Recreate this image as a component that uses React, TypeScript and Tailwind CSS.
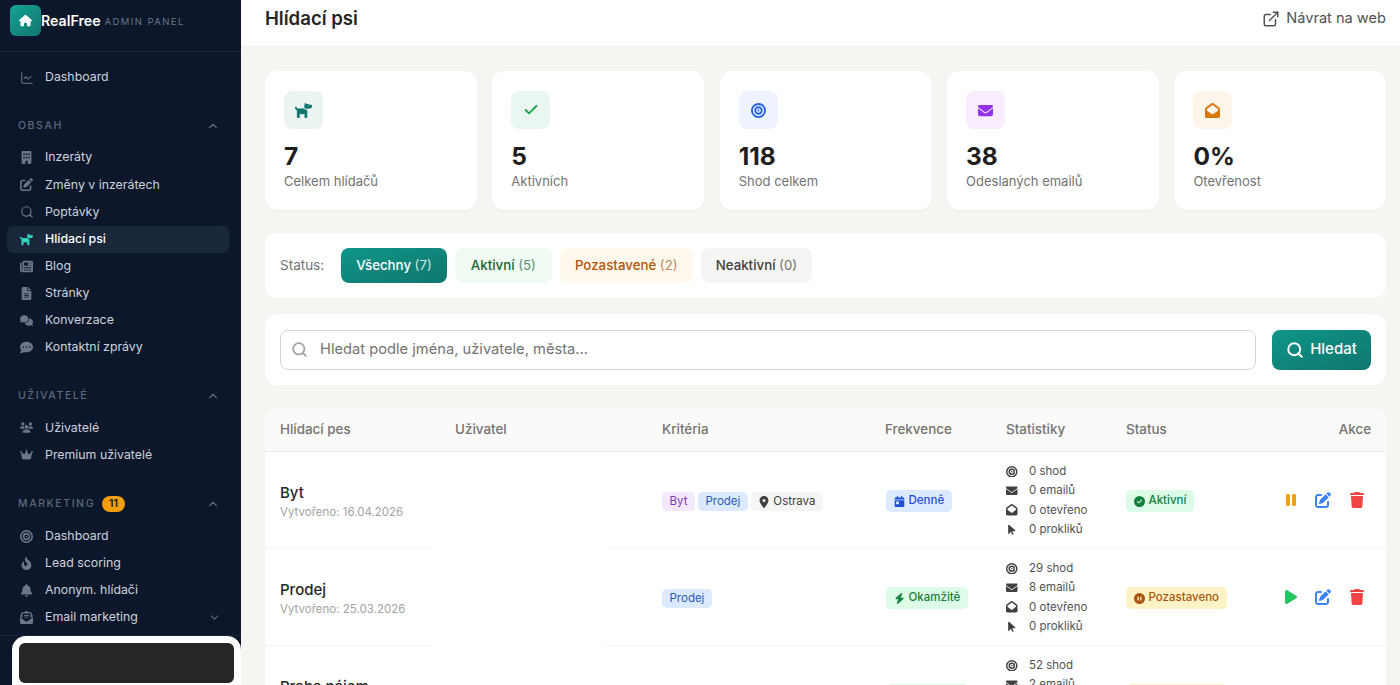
import React from "react";
import {
    FaArrowPointer, FaBell, FaBolt, FaBuilding, FaBullseye, FaCalendarDay, FaCircleCheck, FaCirclePause, FaComments, FaCommentDots,
    FaCrown, FaDog, FaEnvelope, FaEnvelopeOpen, FaEnvelopeOpenText, FaFileLines, FaFireFlameCurved, FaHouse, FaLocationDot,
    FaNewspaper, FaPause, FaPenToSquare, FaPlay, FaTrash, FaUsers,
} from "react-icons/fa6";
import { Check, ChartLine, ChevronDown, ChevronUp, ExternalLink, Search } from "lucide-react";

const font = { fontFamily: "Inter, 'Noto Sans', sans-serif" };

function NavItem({ icon, label, active, chevron }: { icon: React.ReactNode; label: string; active?: boolean; chevron?: boolean }) {
    return (
        <div className={`flex h-[27.15px] items-center rounded-md pl-[13px] pr-[8px] text-[12.35px] ${active ? "bg-[#1a2639] text-white font-medium" : "text-[#ccd3de]"}`}>
            <span className={`flex w-[25px] shrink-0 items-center text-[13px] ${active ? "text-[#2dd4bf]" : "text-[#6b7688]"}`}>{icon}</span>
            <span className="flex-1">{label}</span>
            {chevron && <ChevronDown size={13} className="text-[#5d687a]" />}
        </div>
    );
}

function GroupLabel({ label, badge }: { label: string; badge?: string }) {
    return (
        <div className="flex h-[27px] items-center pl-[11px] pr-[9px]">
            <span className="text-[10.5px] font-medium tracking-[0.15em] text-[#5d687a]">{label}</span>
            {badge && <span className="ml-[7px] rounded-full bg-[#f59e0b] px-[7px] py-[1px] text-[10.5px] font-semibold leading-[14px] text-[#0c172b]">{badge}</span>}
            <ChevronUp size={14} className="ml-auto text-[#5d687a]" />
        </div>
    );
}

function Sidebar() {
    return (
        <aside className="relative flex w-[241px] shrink-0 flex-col bg-[#0c172b]">
            <div className="flex h-[52px] shrink-0 items-start border-b border-[#1b2739] pl-[10px] pt-[5px]">
                <div className="flex h-[31px] w-[31px] items-center justify-center rounded-md bg-gradient-to-br from-[#16a394] to-[#0f766e] text-[13px] text-white">
                    <FaHouse />
                </div>
                <span className="mt-[6px] text-[14.2px] font-semibold leading-[20px] text-white">RealFree</span>
                <span className="ml-[4px] mt-[9px] text-[9.5px] leading-[16px] tracking-[0.15em] text-[#6b7688]">ADMIN PANEL</span>
            </div>
            <nav className="pl-[7px] pr-[12px] pt-[12px]">
                <NavItem icon={<ChartLine size={14} strokeWidth={1.75} />} label="Dashboard" />
                <div className="mt-[21px]"><GroupLabel label="OBSAH" /></div>
                <div className="mt-[5px]">
                    <NavItem icon={<FaBuilding />} label="Inzeráty" />
                    <NavItem icon={<FaPenToSquare />} label="Změny v inzerátech" />
                    <NavItem icon={<Search size={14} />} label="Poptávky" />
                    <NavItem icon={<FaDog />} label="Hlídací psi" active />
                    <NavItem icon={<FaNewspaper />} label="Blog" />
                    <NavItem icon={<FaFileLines />} label="Stránky" />
                    <NavItem icon={<FaComments />} label="Konverzace" />
                    <NavItem icon={<FaCommentDots />} label="Kontaktní zprávy" />
                </div>
                <div className="mt-[21px]"><GroupLabel label="UŽIVATELÉ" /></div>
                <div className="mt-[5px]">
                    <NavItem icon={<FaUsers />} label="Uživatelé" />
                    <NavItem icon={<FaCrown />} label="Premium uživatelé" />
                </div>
                <div className="mt-[22px]"><GroupLabel label="MARKETING" badge="11" /></div>
                <div className="mt-[5px]">
                    <NavItem icon={<FaBullseye />} label="Dashboard" />
                    <NavItem icon={<FaFireFlameCurved />} label="Lead scoring" />
                    <NavItem icon={<FaBell />} label="Anonym. hlídači" />
                    <NavItem icon={<FaEnvelopeOpenText />} label="Email marketing" chevron />
                </div>
            </nav>
            {/* redacted user box over the sidebar footer */}
            <div className="absolute inset-x-0 bottom-0 h-[50px] border-t border-[#1b2739] pl-[12px]">
                <div className="h-full rounded-t-[14px] bg-white px-[7px] pt-[7px]">
                    <div className="h-[40px] rounded-md bg-[#262626]" />
                </div>
            </div>
        </aside>
    );
}

const statCards = [
    { icon: <FaDog className="text-[17px]" />, box: "bg-[#ecf3f3]", color: "text-[#0f766e]", value: "7", label: "Celkem hlídačů" },
    { icon: <Check size={16} strokeWidth={2.75} />, box: "bg-[#eaf6f0]", color: "text-[#16a34a]", value: "5", label: "Aktivních" },
    { icon: <FaBullseye />, box: "bg-[#eef3fe]", color: "text-[#2563eb]", value: "118", label: "Shod celkem" },
    { icon: <FaEnvelope />, box: "bg-[#f9ecfd]", color: "text-[#9333ea]", value: "38", label: "Odeslaných emailů" },
    { icon: <FaEnvelopeOpen />, box: "bg-[#fef5ea]", color: "text-[#d97706]", value: "0%", label: "Otevřenost" },
];

function StatCard({ card }: { card: (typeof statCards)[number] }) {
    return (
        <div className="h-[139px] rounded-xl bg-white pl-[19px] pt-[20px] shadow-[0_1px_2px_rgba(0,0,0,0.04)]">
            <div className={`flex h-[38px] w-[39px] items-center justify-center rounded-lg text-[15px] ${card.box} ${card.color}`}>{card.icon}</div>
            <div className="mt-[12px] text-[24.5px] font-bold leading-[30px] text-[#1f1f1f]">{card.value}</div>
            <div className="text-[13px] leading-[20px] text-[#737373]">{card.label}</div>
        </div>
    );
}

function FilterButton({ label, count, className, countClass }: { label: string; count: string; className: string; countClass: string }) {
    return (
        <div className={`flex h-[35px] items-center rounded-lg text-[13.3px] font-medium ${className}`}>
            {label}&nbsp;<span className={`font-normal ${countClass}`}>{count}</span>
        </div>
    );
}

function Tag({ children, className }: { children: React.ReactNode; className: string }) {
    return <span className={`inline-flex h-[19px] items-center gap-[3px] rounded-[5px] px-[7.5px] text-[11.5px] ${className}`}>{children}</span>;
}

function Pill({ icon, label, className }: { icon: React.ReactNode; label: string; className: string }) {
    return (
        <span className={`inline-flex h-[22px] items-center gap-[4px] rounded-[5px] px-[7.5px] text-[11.5px] font-medium ${className}`}>
            <span className="text-[11px]">{icon}</span>
            {label}
        </span>
    );
}

function StatLine({ icon, text }: { icon: React.ReactNode; text: string }) {
    return (
        <div className="flex h-[19.3px] items-center text-[11.5px] text-[#525252]">
            <span className="flex w-[23px] items-center text-[11.5px] text-[#404040]">{icon}</span>
            {text}
        </div>
    );
}

function Stats({ shod, emails, opened, clicks }: { shod: string; emails: string; opened: string; clicks: string }) {
    return (
        <div>
            <StatLine icon={<FaBullseye />} text={`${shod} shod`} />
            <StatLine icon={<FaEnvelope />} text={`${emails} emailů`} />
            <StatLine icon={<FaEnvelopeOpen />} text={`${opened} otevřeno`} />
            <StatLine icon={<FaArrowPointer />} text={`${clicks} prokliků`} />
        </div>
    );
}

const rows = [
    {
        name: "Byt",
        created: "Vytvořeno: 16.04.2026",
        tags: (
            <>
                <Tag className="bg-[#f3e8fd] text-[#7e3bb8]">Byt</Tag>
                <Tag className="bg-[#dbeafe] text-[#2f5bb7]">Prodej</Tag>
                <Tag className="bg-[#f5f5f4] text-[#404040]"><FaLocationDot className="text-[12px]" />Ostrava</Tag>
            </>
        ),
        freq: <Pill icon={<FaCalendarDay />} label="Denně" className="bg-[#dbeafe] text-[#1d4ed8]" />,
        stats: { shod: "0", emails: "0", opened: "0", clicks: "0" },
        status: <Pill icon={<FaCircleCheck />} label="Aktivní" className="bg-[#dcfce7] text-[#15803d]" />,
        toggle: <FaPause className="-mr-[2px] text-[#f59e0b]" />,
    },
    {
        name: "Prodej",
        created: "Vytvořeno: 25.03.2026",
        tags: <Tag className="bg-[#dbeafe] text-[#2f5bb7]">Prodej</Tag>,
        freq: <Pill icon={<FaBolt />} label="Okamžitě" className="bg-[#dcfce7] text-[#15803d]" />,
        stats: { shod: "29", emails: "8", opened: "0", clicks: "0" },
        status: <Pill icon={<FaCirclePause />} label="Pozastaveno" className="bg-[#fef3c7] text-[#a8550f]" />,
        toggle: <FaPlay className="-mr-[2px] text-[#22c55e]" />,
    },
    {
        name: "Praha nájem",
        created: "Vytvořeno: 25.03.2026",
        tags: <Tag className="bg-[#dbeafe] text-[#2f5bb7]">Pronájem</Tag>,
        freq: <Pill icon={<FaBolt />} label="Okamžitě" className="bg-[#dcfce7] text-[#15803d]" />,
        stats: { shod: "52", emails: "2", opened: "0", clicks: "0" },
        status: <Pill icon={<FaCirclePause />} label="Pozastaveno" className="bg-[#fef3c7] text-[#a8550f]" />,
        toggle: <FaPlay className="-mr-[2px] text-[#22c55e]" />,
    },
];

export default function App() {
    return (
        <div className="flex h-screen overflow-hidden bg-white" style={font}>
            <Sidebar />
            <main className="min-w-0 flex-1 bg-[#f5f5f2]">
                <header className="flex h-[47px] items-center justify-between border-b border-[#efefec] bg-white pb-[8px] pl-[24px] pr-[14px]">
                    <h1 className="text-[18.6px] font-semibold text-[#262626]">Hlídací psi</h1>
                    <div className="flex items-center gap-[6px] text-[14.6px] text-[#525252]">
                        <ExternalLink size={18} />
                        Návrat na web
                    </div>
                </header>

                <div className="pl-[24px] pr-[14px] pt-[24px]">
                    <div className="grid grid-cols-5 gap-[15.75px]">
                        {statCards.map((card) => <StatCard key={card.label} card={card} />)}
                    </div>

                    <div className="mt-[23px] flex h-[65px] items-center gap-[8px] rounded-xl bg-white pl-[15px]">
                        <span className="mr-[9px] text-[13.5px] text-[#737373]">Status:</span>
                        <FilterButton label="Všechny" count="(7)" className="bg-gradient-to-br from-[#0f9688] to-[#0f766e] px-[15px] text-white" countClass="text-[#cde9e5]" />
                        <FilterButton label="Aktivní" count="(5)" className="bg-[#f0fbf4] px-[16px] text-[#166534]" countClass="text-[#5b8f6f]" />
                        <FilterButton label="Pozastavené" count="(2)" className="bg-[#fef9ec] px-[15px] text-[#b45309]" countClass="text-[#bd8a5c]" />
                        <FilterButton label="Neaktivní" count="(0)" className="bg-[#f5f5f4] px-[15px] text-[#404040]" countClass="text-[#737373]" />
                    </div>

                    <div className="mt-[16px] flex h-[71px] items-center gap-[16px] rounded-xl bg-white px-[15px]">
                        <div className="flex h-[40px] flex-1 items-center rounded-lg border border-[#d4d4d4] pl-[10px] text-[14.7px] text-[#737373]">
                            <Search size={17} strokeWidth={2.5} className="mr-[12px] text-[#a3a3a3]" />
                            Hledat podle jména, uživatele, města...
                        </div>
                        <div className="flex h-[40px] w-[99px] items-center justify-center gap-[6px] rounded-lg bg-gradient-to-br from-[#0f9688] to-[#0f766e] text-[15px] font-medium text-white">
                            <Search size={18} strokeWidth={2.5} />
                            Hledat
                        </div>
                    </div>

                    <div className="mt-[23px] overflow-hidden rounded-t-xl bg-white">
                        <table className="w-full table-fixed border-separate border-spacing-0">
                            <colgroup>
                                <col className="w-[175px]" />
                                <col className="w-[207px]" />
                                <col className="w-[223px]" />
                                <col className="w-[121px]" />
                                <col className="w-[120px]" />
                                <col className="w-[135px]" />
                                <col />
                            </colgroup>
                            <thead>
                                <tr className="h-[44px] bg-[#fafaf8] text-left text-[13.4px] text-[#737373]">
                                    <th className="border-b border-[#ececea] pl-[15px] font-medium">Hlídací pes</th>
                                    <th className="border-b border-[#ececea] pl-[15px] font-medium">Uživatel</th>
                                    <th className="border-b border-[#ececea] pl-[15px] font-medium">Kritéria</th>
                                    <th className="border-b border-[#ececea] pl-[15px] font-medium">Frekvence</th>
                                    <th className="border-b border-[#ececea] pl-[15px] font-medium">Statistiky</th>
                                    <th className="border-b border-[#ececea] pl-[15px] font-medium">Status</th>
                                    <th className="border-b border-[#ececea] pr-[15px] text-right font-medium">Akce</th>
                                </tr>
                            </thead>
                            <tbody>
                                {rows.map((row) => (
                                    <tr key={row.name} className="h-[97px]">
                                        <td className="border-b border-[#f5f5f3] pl-[15px] pt-[5px]">
                                            <div className="text-[15px] font-medium leading-[20px] text-[#262626]">{row.name}</div>
                                            <div className="mt-[1px] text-[11.5px] text-[#a3a3a3]">{row.created}</div>
                                        </td>
                                        {/* user column is blanked out in the source, including its row line */}
                                        <td className="relative border-b border-[#f5f5f3]">
                                            <div className="absolute -bottom-px -left-[7px] h-[3px] w-[172px] bg-white" />
                                        </td>
                                        <td className="border-b border-[#f5f5f3] pl-[15px] pt-[3px]">
                                            <div className="flex items-center gap-[3px]">{row.tags}</div>
                                        </td>
                                        <td className="border-b border-[#f5f5f3] pl-[16px] pt-[1px]">{row.freq}</td>
                                        <td className="border-b border-[#f5f5f3] pl-[15px] pt-[1px]"><Stats {...row.stats} /></td>
                                        <td className="border-b border-[#f5f5f3] pl-[15px] pt-[1px]">{row.status}</td>
                                        <td className="border-b border-[#f5f5f3] pb-[1px] pr-[21px]">
                                            <div className="flex items-center justify-end gap-[18px] text-[16px]">
                                                {row.toggle}
                                                <FaPenToSquare className="text-[#3b82f6]" />
                                                <FaTrash className="text-[#ef4444]" />
                                            </div>
                                        </td>
                                    </tr>
                                ))}
                            </tbody>
                        </table>
                    </div>
                </div>
            </main>
        </div>
    );
}
